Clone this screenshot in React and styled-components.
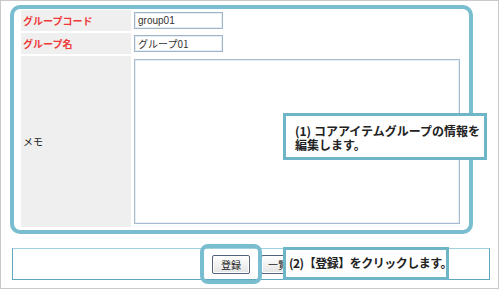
import React from 'react'
import styled, { createGlobalStyle } from 'styled-components'

const GlobalStyle = createGlobalStyle`
  body {
    margin: 0;
    background: #fff;
    font-family: "Noto Sans CJK JP", "Liberation Sans", sans-serif;
  }
`

const Frame = styled.div`
  position: relative;
  width: 499px;
  height: 289px;
  box-sizing: border-box;
  border: 1px solid #c9c9c9;
  overflow: hidden;
`

const Panel = styled.div`
  margin: 4px 0 0 9px;
  width: 463px;
  height: 229px;
  box-sizing: border-box;
  border: 4px solid #78bdd0;
  border-radius: 10px;
  padding: 1px 0 0 7px;
`

const FormGrid = styled.div`
  display: grid;
  grid-template-columns: 110px 326px;
  grid-template-rows: 21px 21px 171px;
  gap: 2px;
`

const Label = styled.div`
  background: #efefef;
  display: flex;
  align-items: center;
  padding-left: 2px;
  font-size: 10px;
  font-weight: ${p => (p.$required ? 700 : 400)};
  color: ${p => (p.$required ? '#ee3a3a' : '#222')};
`

const Value = styled.div`
  padding: 2px 0 0 1px;
`

const TextInput = styled.div`
  width: 89px;
  height: 17px;
  box-sizing: border-box;
  border: 1px solid #9fb4c9;
  box-shadow: inset 0 0 0 1px #e6edf4;
  padding-left: 3px;
  font-size: 10px;
  line-height: 15px;
  color: #333;
  font-family: ${p => (p.$latin ? '"Liberation Sans", sans-serif' : '"Noto Sans CJK JP", sans-serif')};
`

const Memo = styled.div`
  width: 326px;
  height: 165px;
  box-sizing: border-box;
  margin-top: 1px;
  border: 1px solid #a9bbcf;
  box-shadow: inset 0 0 0 1px #e8eef4;
`

const ButtonBar = styled.div`
  margin: 14px 0 0 11px;
  width: 478px;
  height: 32px;
  box-sizing: border-box;
  border: 1px solid #5ea8bf;
  border-top-color: #9fd0de;
  display: flex;
  align-items: center;
  gap: 11px;
  padding-left: 199px;
`

const ButtonWrap = styled.div`
  position: relative;
  display: flex;
`

const Button = styled.div`
  height: 19px;
  box-sizing: border-box;
  padding: 0 ${p => (p.$wide ? '6px' : '8px')};
  border: 1px solid #51627a;
  border-radius: 2px;
  background: linear-gradient(#ffffff, #e4e4e4);
  box-shadow: inset 0 0 0 1px #fff;
  font-size: 10px;
  line-height: 17px;
  color: #222;
  white-space: nowrap;
`

const Highlight = styled.div`
  position: absolute;
  left: -12px;
  right: -12px;
  top: -11px;
  bottom: -10px;
  border: 4px solid #78bdd0;
  border-radius: 8px;
`

const Callout = styled.div`
  position: absolute;
  left: ${p => p.$x}px;
  top: ${p => p.$y}px;
  width: ${p => p.$w}px;
  height: ${p => p.$h}px;
  box-sizing: border-box;
  border: 3px solid #6db5c7;
  background: #fff;
  padding: ${p => p.$pad};
  font-size: 12px;
  font-weight: 700;
  line-height: 14px;
  letter-spacing: ${p => p.$tight ? '-0.5px' : '0'};
  color: #222;
  white-space: nowrap;
`

export default function App() {
  return (
    <Frame>
      <GlobalStyle />
      <Panel>
        <FormGrid>
          <Label $required>グループコード</Label>
          <Value>
            <TextInput $latin>group01</TextInput>
          </Value>
          <Label $required>グループ名</Label>
          <Value>
            <TextInput>グループ01</TextInput>
          </Value>
          <Label>メモ</Label>
          <Value>
            <Memo />
          </Value>
        </FormGrid>
      </Panel>
      <ButtonBar>
        <ButtonWrap>
          <Button>登録</Button>
          <Highlight />
        </ButtonWrap>
        <Button $wide>一覧</Button>
      </ButtonBar>
      <Callout $x={282} $y={112} $w={204} $h={47} $pad="8px 0 0 9px">
        (1) コアアイテムグループの情報を
        <br />
        編集します。
      </Callout>
      <Callout $x={282} $y={246} $w={166} $h={33} $pad="6px 0 0 3px" $tight>
        (2)【登録】をクリックします。
      </Callout>
    </Frame>
  )
}
